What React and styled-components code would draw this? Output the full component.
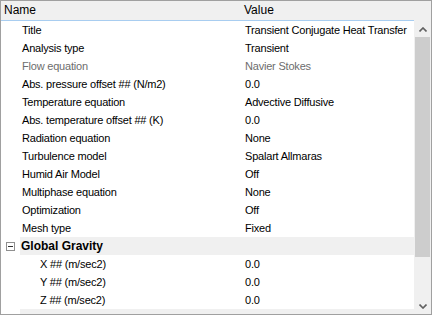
import React from "react";
import styled, { createGlobalStyle } from "styled-components";

const GlobalStyle = createGlobalStyle`
  html, body {
    margin: 0;
    padding: 0;
    background: #ffffff;
  }
  body {
    font-family: "Liberation Sans", Arial, sans-serif;
  }
`;

const Frame = styled.div`
  width: 432px;
  height: 315px;
  box-sizing: border-box;
  border: 1px solid #a0a0a0;
  display: flex;
  overflow: hidden;
  background: #ffffff;
`;

const List = styled.div`
  flex: 1;
  display: flex;
  flex-direction: column;
  min-width: 0;
`;

const Header = styled.div`
  height: 19px;
  flex: none;
  display: grid;
  grid-template-columns: 241px 1fr;
  align-items: center;
  background: #f0f0f0;
  border-bottom: 1px solid #a8cdf0;
  font-size: 12px;
  color: #000000;
`;

const HeaderCell = styled.div`
  padding-left: ${({ first }) => (first ? "3px" : "2px")};
  line-height: 19px;
`;

const Rows = styled.div`
  flex: 1;
  display: flex;
  flex-direction: column;
`;

const Row = styled.div`
  height: 18px;
  flex: none;
  display: grid;
  grid-template-columns: 241px 1fr;
  align-items: center;
  font-size: 11px;
  letter-spacing: -0.2px;
  line-height: 18px;
  color: ${({ disabled }) => (disabled ? "#6d6d6d" : "#000000")};
  white-space: nowrap;
`;

const NameCell = styled.div`
  padding-left: ${({ indent }) => (indent ? "39px" : "21px")};
  overflow: hidden;
`;

const ValueCell = styled.div`
  padding-left: 3px;
  overflow: hidden;
`;

const CategoryRow = styled.div`
  height: 18px;
  flex: none;
  display: flex;
  align-items: center;
`;

const Gutter = styled.div`
  width: 19px;
  height: 100%;
  display: flex;
  align-items: center;
  padding-left: 5px;
  box-sizing: border-box;
`;

const ToggleBox = styled.div`
  width: 9px;
  height: 9px;
  box-sizing: border-box;
  border: 1px solid #8f8f8f;
  background: #ffffff;
  display: flex;
  align-items: center;
  justify-content: center;

  &::after {
    content: "";
    width: 5px;
    height: 1px;
    background: #333333;
  }
`;

const CategoryLabel = styled.div`
  flex: 1;
  height: 100%;
  background: #f0f0f0;
  font-size: 12px;
  font-weight: bold;
  line-height: 18px;
  padding-left: 1px;
  color: #000000;
`;

const Filler = styled.div`
  flex: 1;
  margin-left: 19px;
  background: #f0f0f0;
`;

const Scrollbar = styled.div`
  width: 16px;
  flex: none;
  display: flex;
  flex-direction: column;
  background: #f0f0f0;
  border-left: 1px solid #f0f0f0;
`;

const ScrollTop = styled.div`
  height: 20px;
  flex: none;
  background: #f0f0f0;
`;

const Arrow = styled.div`
  height: 16px;
  flex: none;
  display: flex;
  align-items: center;
  justify-content: center;
`;

const Track = styled.div`
  flex: 1;
  display: flex;
  flex-direction: column;
  padding-top: 0px;
`;

const Thumb = styled.div`
  height: 220px;
  margin: 0 1px 0 0;
  background: #cdcdcd;
`;

const Chevron = ({ down }) => (
  <svg width="8" height="5" viewBox="0 0 8 5">
    <path
      d={down ? "M0.5 0.5 L4 4 L7.5 0.5" : "M0.5 4.5 L4 1 L7.5 4.5"}
      fill="none"
      stroke="#606060"
      strokeWidth="1.6"
    />
  </svg>
);

const properties = [
  { name: "Title", value: "Transient Conjugate Heat Transfer" },
  { name: "Analysis type", value: "Transient" },
  { name: "Flow equation", value: "Navier Stokes", disabled: true },
  { name: "Abs. pressure offset ## (N/m2)", value: "0.0" },
  { name: "Temperature equation", value: "Advective Diffusive" },
  { name: "Abs. temperature offset ## (K)", value: "0.0" },
  { name: "Radiation equation", value: "None" },
  { name: "Turbulence model", value: "Spalart Allmaras" },
  { name: "Humid Air Model", value: "Off" },
  { name: "Multiphase equation", value: "None" },
  { name: "Optimization", value: "Off" },
  { name: "Mesh type", value: "Fixed" },
];

const gravity = [
  { name: "X ## (m/sec2)", value: "0.0" },
  { name: "Y ## (m/sec2)", value: "0.0" },
  { name: "Z ## (m/sec2)", value: "0.0" },
];

export default function App() {
  return (
    <>
      <GlobalStyle />
      <Frame>
        <List>
          <Header>
            <HeaderCell first>Name</HeaderCell>
            <HeaderCell>Value</HeaderCell>
          </Header>
          <Rows>
            {properties.map((p) => (
              <Row key={p.name} disabled={p.disabled}>
                <NameCell>{p.name}</NameCell>
                <ValueCell>{p.value}</ValueCell>
              </Row>
            ))}
            <CategoryRow>
              <Gutter>
                <ToggleBox />
              </Gutter>
              <CategoryLabel>Global Gravity</CategoryLabel>
            </CategoryRow>
            {gravity.map((p) => (
              <Row key={p.name}>
                <NameCell indent>{p.name}</NameCell>
                <ValueCell>{p.value}</ValueCell>
              </Row>
            ))}
            <Filler />
          </Rows>
        </List>
        <Scrollbar>
          <ScrollTop />
          <Arrow>
            <Chevron />
          </Arrow>
          <Track>
            <Thumb />
          </Track>
          <Arrow>
            <Chevron down />
          </Arrow>
        </Scrollbar>
      </Frame>
    </>
  );
}
